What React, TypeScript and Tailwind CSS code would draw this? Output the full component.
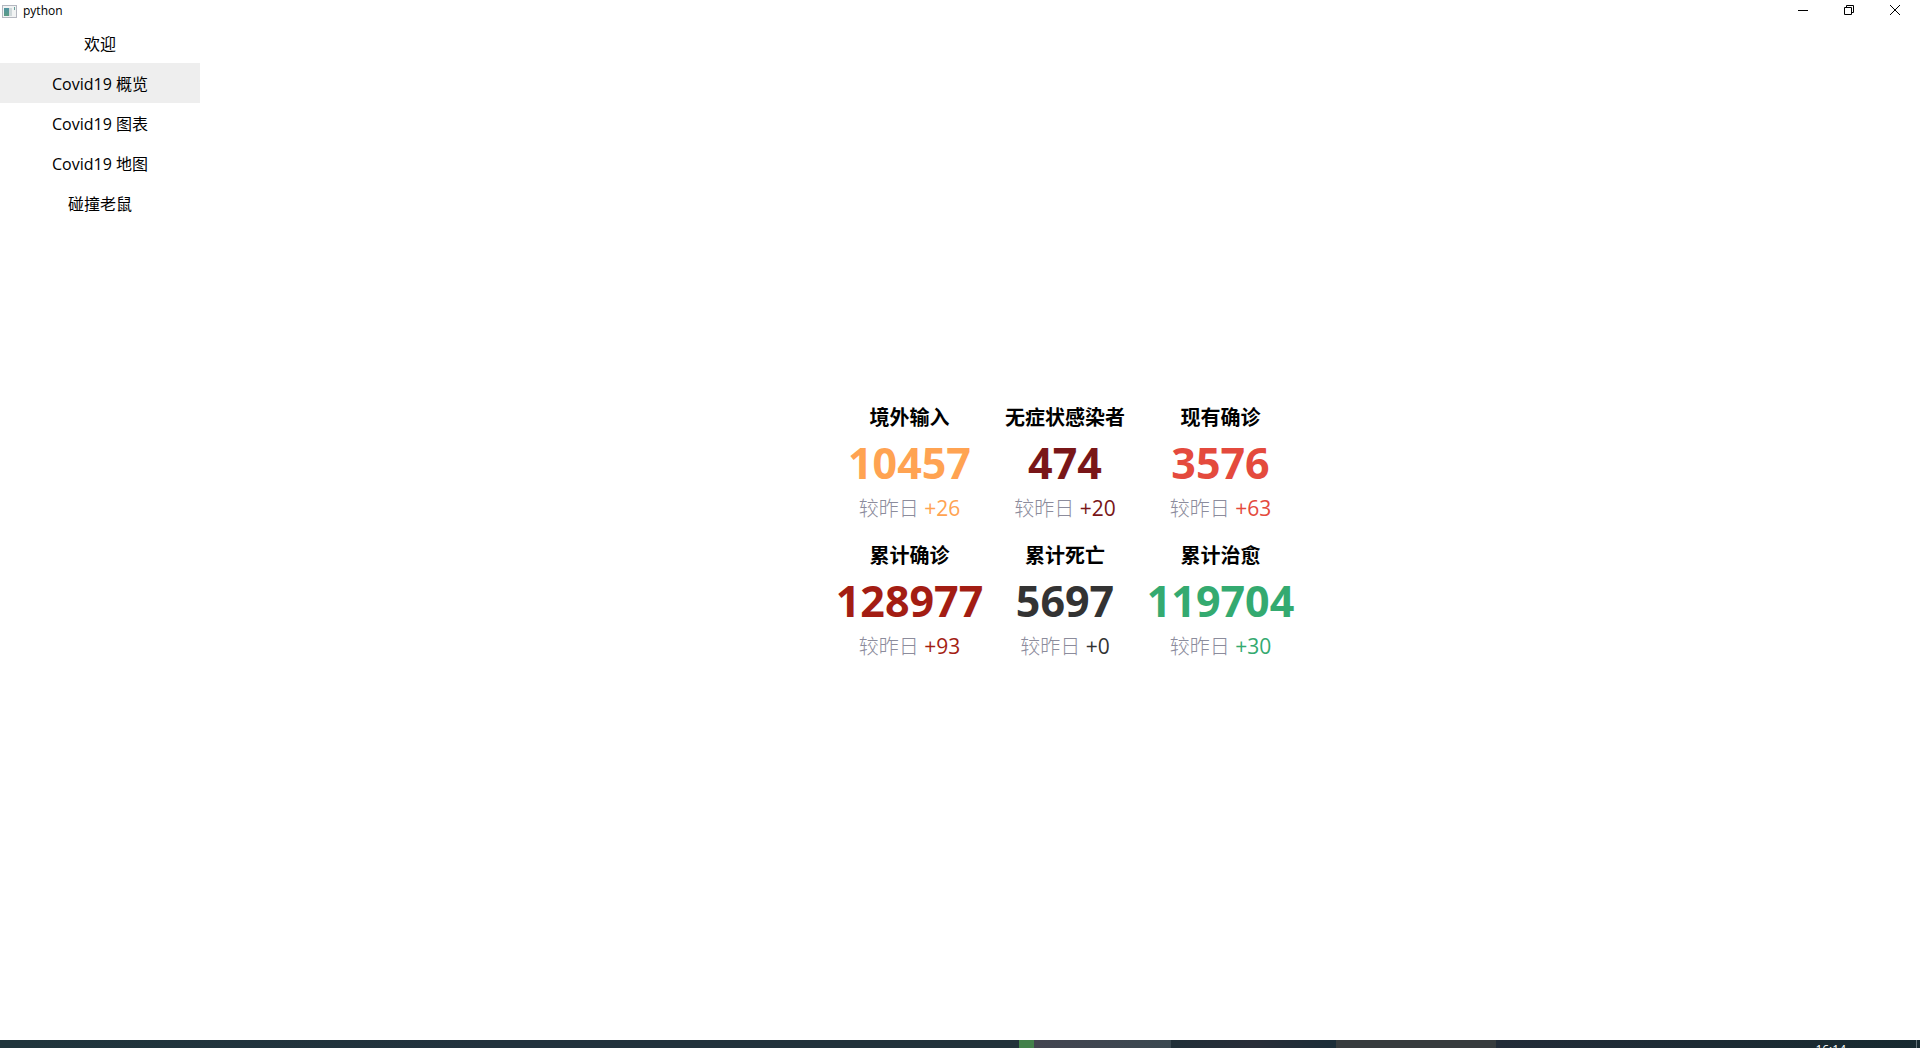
const NAV = ["欢迎", "Covid19 概览", "Covid19 图表", "Covid19 地图", "碰撞老鼠"];

const STATS = [
  { label: "境外输入", value: "10457", delta: "+26", color: "text-[#ffa352]" },
  { label: "无症状感染者", value: "474", delta: "+20", color: "text-[#791618]" },
  { label: "现有确诊", value: "3576", delta: "+63", color: "text-[#e44a3d]" },
  { label: "累计确诊", value: "128977", delta: "+93", color: "text-[#a31d13]" },
  { label: "累计死亡", value: "5697", delta: "+0", color: "text-[#333333]" },
  { label: "累计治愈", value: "119704", delta: "+30", color: "text-[#34aa70]" },
];

function AppIcon() {
  return (
    <svg width="15" height="13" viewBox="0 0 15 13" aria-hidden="true">
      <defs>
        <linearGradient id="pane" x1="0" y1="0" x2="0" y2="1">
          <stop offset="0" stopColor="#4f93a0" />
          <stop offset="1" stopColor="#5c9c84" />
        </linearGradient>
      </defs>
      <rect x="0.5" y="0.5" width="14" height="12" fill="#f1f3f3" stroke="#b4b7c0" />
      <rect x="2" y="3" width="5" height="8" fill="url(#pane)" />
      <rect x="7" y="3" width="3" height="8" fill="#cfd8da" />
      <rect x="12" y="2" width="1" height="3" fill="#6aa19c" />
    </svg>
  );
}

function TitleBar() {
  return (
    <header className="flex h-[23px] shrink-0 items-start justify-between px-0.5">
      <div className="flex h-[22px] items-center gap-1.5">
        <AppIcon />
        <span className="text-xs">python</span>
      </div>
      <div className="flex h-5">
        <button aria-label="最小化" className="flex w-[46px] items-center justify-center">
          <svg width="10" height="10" viewBox="0 0 10 10" stroke="#000" fill="none">
            <path d="M0 5.5H10" />
          </svg>
        </button>
        <button aria-label="还原" className="flex w-[46px] items-center justify-center">
          <svg width="10" height="10" viewBox="0 0 10 10" stroke="#000" fill="none">
            <path d="M0.5 2.5H7.5V9.5H0.5ZM2.5 2.5V0.5H9.5V7.5H7.5" />
          </svg>
        </button>
        <button aria-label="关闭" className="flex w-[46px] items-center justify-center">
          <svg width="10" height="10" viewBox="0 0 10 10" stroke="#000" fill="none">
            <path d="M0 0L10 10M10 0L0 10" />
          </svg>
        </button>
      </div>
    </header>
  );
}

export default function App() {
  return (
    <div className="flex h-screen flex-col overflow-hidden bg-white font-['Open_Sans','Noto_Sans_CJK_SC',sans-serif] text-black">
      <TitleBar />
      <div className="flex min-h-0 flex-1">
        <nav className="flex w-[200px] shrink-0 flex-col">
          {NAV.map((item, i) => (
            <button
              key={item}
              aria-current={i === 1 ? "page" : undefined}
              className={`h-10 pt-0.5 text-base ${i === 1 ? "bg-[#eeeeee]" : "bg-white"}`}
            >
              {item}
            </button>
          ))}
        </nav>
        <main className="flex flex-1 items-center justify-center pl-2.5">
          <div className="grid grid-cols-3 gap-x-2 gap-y-3.5 text-center">
            {STATS.map((s) => (
              <section key={s.label}>
                <h2 className="h-[34px] text-xl leading-[34px] font-bold">{s.label}</h2>
                <p className={`h-14 text-[43px] leading-14 font-bold ${s.color}`}>{s.value}</p>
                <p className="h-[34px] text-[21px] leading-[34px]">
                  <span className="text-xl leading-[34px] font-light text-[#8c8c9c]">较昨日</span>{" "}
                  <span className={s.color}>{s.delta}</span>
                </p>
              </section>
            ))}
          </div>
        </main>
      </div>
      <footer className="flex h-2 shrink-0 overflow-hidden bg-[#1c2b33]">
        <div className="flex-1 bg-linear-to-r from-[#20353c] via-[#22323d] to-[#22323a]" />
        <div className="w-[15px] bg-[#43804a]" />
        <div className="w-[137px] bg-linear-to-r from-[#434450] to-[#3a4850]" />
        <div className="w-[165px] bg-linear-to-r from-[#202f38] via-[#282d38] to-[#1b2d38]" />
        <div className="w-[160px] bg-[#373c3e]" />
        <div className="flex w-[424px] justify-end bg-linear-to-r from-[#222c38] to-[#172a30]">
          <time className="mt-1 mr-[70px] text-xs leading-3 text-white">16:14</time>
          <div className="mr-[3px] w-px bg-[#66747a]" />
        </div>
      </footer>
    </div>
  );
}
